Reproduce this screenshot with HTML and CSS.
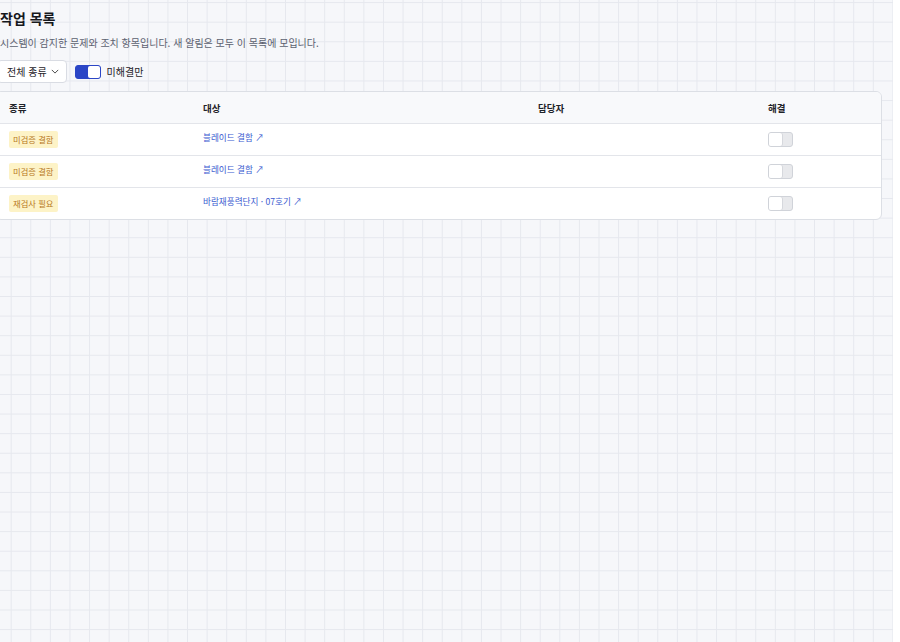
FILE: index.html
```html
<!DOCTYPE html>
<html lang="ko">
<head>
    <meta charset="UTF-8">
    <meta name="viewport" content="width=device-width, initial-scale=1.0">
    <title>작업 목록</title>
    <link rel="stylesheet" href="styles.css">
</head>
<body>
    <div class="page">
        <div class="content">
            <h1 class="title">작업 목록</h1>
            <p class="subtitle">시스템이 감지한 문제와 조치 항목입니다. 새 알림은 모두 이 목록에 모입니다.</p>

            <div class="filters">
                <button class="select-button">전체 종류
                    <svg class="chevron" viewBox="0 0 10 6" width="8" height="5"><path d="M1 1l4 4 4-4" fill="none" stroke="currentColor" stroke-width="1.2"/></svg>
                </button>
                <label class="switch-label">
                    <span class="switch switch-on"><span class="switch-knob"></span></span>
                    미해결만
                </label>
            </div>

            <div class="task-table">
                <div class="task-row task-head">
                    <div class="cell">종류</div>
                    <div class="cell">대상</div>
                    <div class="cell">담당자</div>
                    <div class="cell">해결</div>
                </div>
                <div class="task-row">
                    <div class="cell"><span class="badge">미검증 결함</span></div>
                    <div class="cell"><a class="target-link" href="#">블레이드 결함 ↗</a></div>
                    <div class="cell"></div>
                    <div class="cell"><span class="resolve-toggle"><span class="resolve-knob"></span></span></div>
                </div>
                <div class="task-row">
                    <div class="cell"><span class="badge">미검증 결함</span></div>
                    <div class="cell"><a class="target-link" href="#">블레이드 결함 ↗</a></div>
                    <div class="cell"></div>
                    <div class="cell"><span class="resolve-toggle"><span class="resolve-knob"></span></span></div>
                </div>
                <div class="task-row">
                    <div class="cell"><span class="badge">재검사 필요</span></div>
                    <div class="cell"><a class="target-link" href="#">바람재풍력단지 · 07호기 ↗</a></div>
                    <div class="cell"></div>
                    <div class="cell"><span class="resolve-toggle"><span class="resolve-knob"></span></span></div>
                </div>
            </div>
        </div>
    </div>
</body>
</html>
```

FILE: styles.css
```css
html {
    background-color: #ffffff;
}

body {
    margin: 0;
    font-family: "Noto Sans CJK KR", "Noto Sans", sans-serif;
    color: #1f2329;
}

.page {
    width: 893px;
    min-height: 642px;
    overflow: hidden;
    background-color: #f6f7fa;
    background-image:
        linear-gradient(to right, #e6e8ee 1px, transparent 1px),
        linear-gradient(to bottom, #e6e8ee 1px, transparent 1px);
    background-size: 19.6px 19.6px;
    background-position: 10.7px 2.1px;
}

.content {
    margin-left: -5px;
    width: 887px;
    padding-top: 8px;
}

.title {
    margin: 0;
    padding-left: 5px;
    font-size: 14px;
    line-height: 20px;
    font-weight: 700;
    color: #16181d;
}

.subtitle {
    margin: 7px 0 0;
    padding-left: 5px;
    font-size: 10px;
    line-height: 16px;
    color: #5c6170;
}

.filters {
    display: flex;
    align-items: center;
    gap: 8px;
    margin-top: 9px;
}

.select-button {
    display: flex;
    align-items: center;
    gap: 4px;
    height: 23px;
    margin-left: 2px;
    padding: 0 7px 0 9px;
    font-family: inherit;
    font-size: 10px;
    color: #1f2329;
    background-color: #ffffff;
    border: 1px solid #d9dce3;
    border-radius: 4px;
}

.chevron {
    color: #444;
}

.switch-label {
    display: flex;
    align-items: center;
    gap: 6px;
    font-size: 10px;
    color: #1f2329;
}

.switch {
    display: flex;
    width: 26px;
    height: 14px;
    box-sizing: border-box;
    border-radius: 3px;
    border: 1.5px solid #2b46c6;
    background-color: #2b46c6;
    justify-content: flex-end;
}

.switch-knob {
    width: 12px;
    height: 100%;
    background-color: #ffffff;
    border-radius: 2px;
}

.task-table {
    margin-top: 8px;
    background-color: #ffffff;
    border: 1px solid #dcdfe5;
    border-radius: 6px;
    overflow: hidden;
}

.task-row {
    display: grid;
    grid-template-columns: 194px 335px 230px 1fr;
    height: 31px;
    border-top: 1px solid #e3e5ea;
}

.task-head {
    border-top: none;
    background-color: #f8f9fb;
    font-size: 9.5px;
    font-weight: 700;
    color: #1f2329;
}

.cell {
    display: flex;
    align-items: center;
    padding-left: 13px;
}

.badge {
    padding: 0 4px;
    font-size: 8.3px;
    line-height: 17px;
    color: #b7771c;
    background-color: #fdf3c7;
    border-radius: 2px;
}

.target-link {
    margin-bottom: 5px;
    font-size: 8.6px;
    color: #3a5bd0;
    text-decoration: none;
}

.resolve-toggle {
    display: flex;
    width: 25px;
    height: 15px;
    box-sizing: border-box;
    border: 1px solid #d0d3d9;
    border-radius: 3px;
    background-color: #e8e9ec;
}

.resolve-knob {
    width: 13px;
    height: 100%;
    background-color: #ffffff;
    border-radius: 2px;
    box-shadow: 1px 0 0 #d6d8dd;
}
```
